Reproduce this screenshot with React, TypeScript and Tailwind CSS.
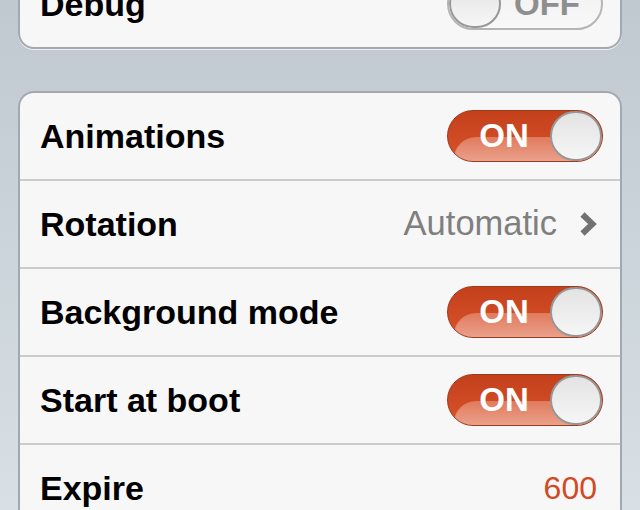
import React from 'react';

type RowProps = {
  label: string;
  first?: boolean;
  children: React.ReactNode;
  tight?: boolean;
};

function Row({ label, first, children, tight }: RowProps) {
  return (
    <div
      className={`flex items-center justify-between pl-5 ${tight ? 'pr-[17px]' : 'pr-[23px]'} ${
        first ? 'h-[86px]' : 'h-[88px] border-t-2 border-[#cbcbcb]'
      }`}
    >
      <span className="text-[34px] font-bold text-black">{label}</span>
      {children}
    </div>
  );
}

function Toggle({ on }: { on: boolean }) {
  if (on) {
    return (
      <div className="relative h-[52px] w-[156px] overflow-hidden rounded-full border border-[#9b3a1e] bg-gradient-to-b from-[#c4401b] to-[#d8532b]">
        <div className="absolute bottom-0 left-[6px] right-0 h-[24px] rounded-tl-[22px] bg-gradient-to-b from-[#e07a5d] to-[#eaa08a]" />
        <span className="absolute left-0 top-0 flex h-full w-[112px] items-center justify-center text-[33px] font-bold text-white">
          ON
        </span>
        <div className="absolute right-0 top-0 h-[50px] w-[52px] rounded-full border-2 border-[#979797] bg-gradient-to-b from-[#e3e3e3] to-[#f6f6f6]" />
      </div>
    );
  }
  return (
    <div className="relative h-[52px] w-[156px] overflow-hidden rounded-full border-2 border-[#b5b5b5] bg-gradient-to-b from-[#f0f0f0] to-[#f8f8f8]">
      <span className="absolute right-0 top-0 flex h-full w-[108px] items-center justify-center text-[33px] font-bold text-[#8e8e8e]">
        OFF
      </span>
      <div className="absolute left-0 top-0 h-[48px] w-[52px] rounded-full border-2 border-[#979797] bg-gradient-to-b from-[#e3e3e3] to-[#f6f6f6]" />
    </div>
  );
}

function Chevron() {
  return (
    <svg width="18" height="26" viewBox="0 0 18 26" className="ml-[22px]">
      <polyline points="3.5,3.5 13.5,13 3.5,22.5" fill="none" stroke="#727272" strokeWidth="6" strokeLinecap="butt" strokeLinejoin="miter" />
    </svg>
  );
}

export default function App() {
  return (
    <div
      className="h-[510px] w-[640px] overflow-hidden bg-gradient-to-b from-[#bfc9cf] to-[#d8e0e5] px-[18px]"
      style={{ fontFamily: '"Liberation Sans", Arial, sans-serif' }}
    >
      <div className="-mt-[41px] overflow-hidden rounded-[16px] border-2 border-[#a1a9af] bg-[#f7f7f7] shadow-[0_1px_0_#eef2f4]">
        <Row label="Debug" first tight>
          <Toggle on={false} />
        </Row>
      </div>

      <div className="mt-[42px] overflow-hidden rounded-[16px] border-2 border-[#a1a9af] bg-[#f7f7f7] shadow-[0_1px_0_#eef2f4]">
        <Row label="Animations" first tight>
          <Toggle on />
        </Row>
        <Row label="Rotation">
          <div className="flex items-center">
            <span className="text-[34.5px] text-[#7f7f7f]">Automatic</span>
            <Chevron />
          </div>
        </Row>
        <Row label="Background mode" tight>
          <Toggle on />
        </Row>
        <Row label="Start at boot" tight>
          <Toggle on />
        </Row>
        <Row label="Expire">
          <span className="text-[32px] text-[#d14a24]">600</span>
        </Row>
      </div>
    </div>
  );
}
